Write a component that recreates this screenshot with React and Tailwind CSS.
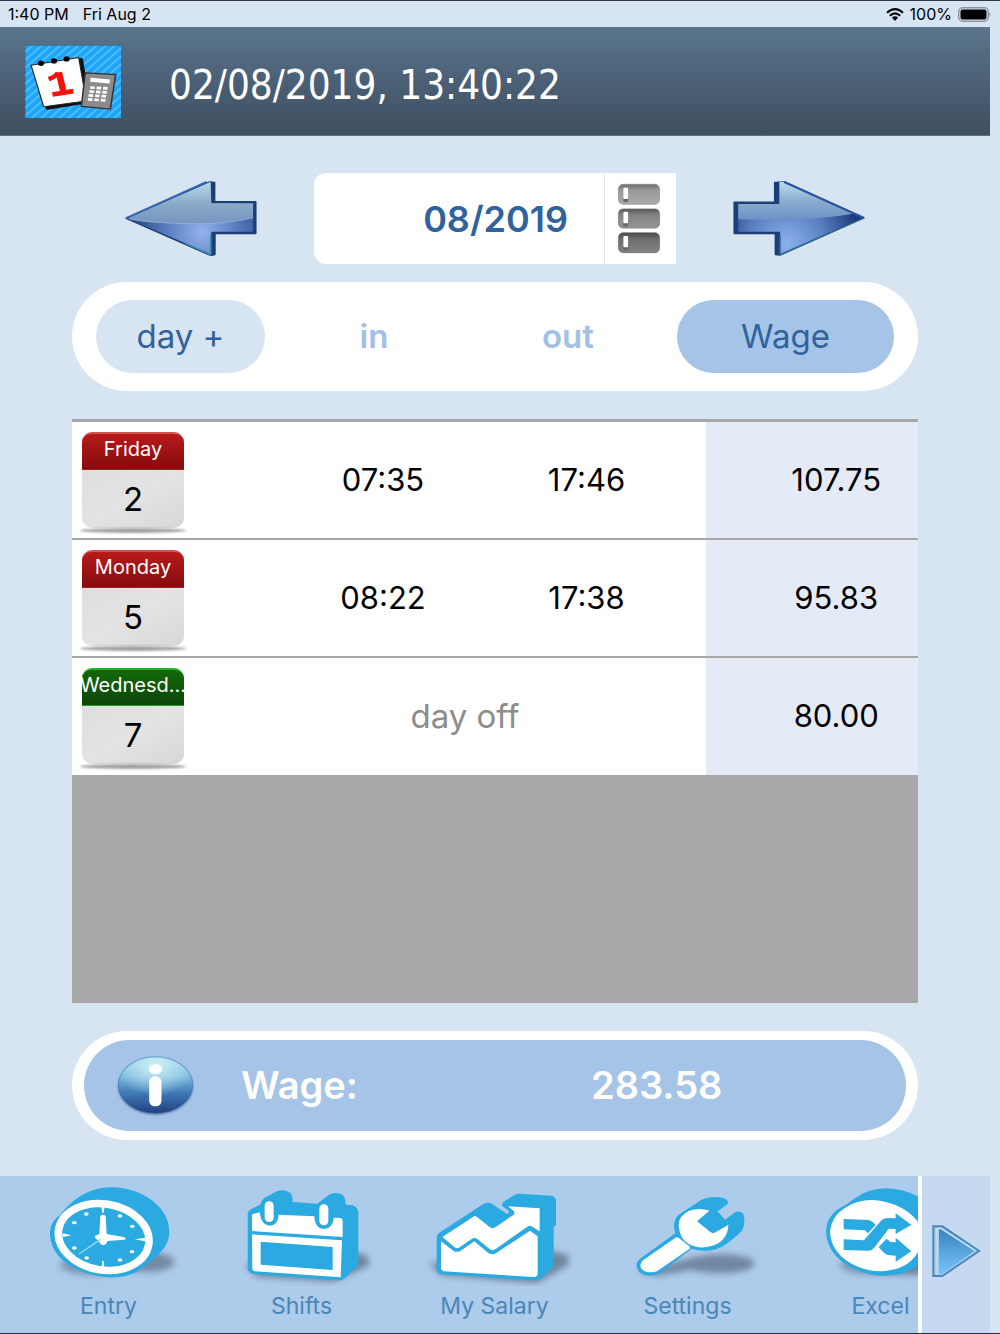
import React from "react";

const BLUE = "#2ba9e1";

function Logo() {
  return (
    <svg viewBox="64 134 252 220" preserveAspectRatio="none" className="h-[73px] w-24 shrink-0" role="img" aria-label="Salary calendar">
      <defs>
        <pattern id="stripes" width="17" height="17" patternUnits="userSpaceOnUse" patternTransform="rotate(45)">
          <rect width="17" height="17" fill="#1da6fb" />
          <rect width="4" height="17" fill="#63c3f7" />
        </pattern>
      </defs>
      <rect x="64" y="134" width="252" height="220" fill="url(#stripes)" />
      <path d="M64 354V135H316" fill="none" stroke="#2b5e80" strokeWidth="2" />
      <path d="M92 203L213 176L232 306L122 326Z" fill="#111" stroke="#111" strokeWidth="6" strokeLinejoin="round" />
      <path d="M80 195L205 172L225 303L113 320Z" fill="#fff" stroke="#222" strokeWidth="3" strokeLinejoin="round" />
      <g fill="#000">
        <circle cx="106" cy="189" r="8" />
        <circle cx="140" cy="182" r="8" />
        <circle cx="173" cy="176" r="8" />
      </g>
      <path d="M126 237Q142 232 151 218" fill="none" stroke="#f5120c" strokeWidth="13" />
      <path d="M136 283L191 273" fill="none" stroke="#f5120c" strokeWidth="14" />
      <path d="M153 216L165 276" stroke="#f5120c" strokeWidth="17" />
      <path d="M222 218L302 223L288 327L212 319Z" fill="#8b8b8b" stroke="#333" strokeWidth="4" />
      <path d="M236 233L287 238L286 250L235 245Z" fill="#fff" />
      <g stroke="#fff" strokeWidth="8" strokeDasharray="12 5">
        <path d="M235 262L282 265" />
        <path d="M233 274L280 277" />
        <path d="M231 286L278 289" />
        <path d="M229 298L276 301" />
      </g>
    </svg>
  );
}

function LeftArrow() {
  return (
    <svg viewBox="42 60 402 232" className="h-[77px] w-[134px]" aria-hidden="true">
      <defs>
        <linearGradient id="laTop" x1="0" y1="0" x2="0" y2="1">
          <stop offset="0" stopColor="#b8deee" />
          <stop offset="0.5" stopColor="#8aabc8" />
          <stop offset="1" stopColor="#7594c0" />
        </linearGradient>
        <radialGradient id="laLow" gradientUnits="userSpaceOnUse" cx="275" cy="218" r="200">
          <stop offset="0" stopColor="#93b3ec" />
          <stop offset="0.5" stopColor="#5b80c1" />
          <stop offset="1" stopColor="#2b4d8e" />
        </radialGradient>
      </defs>
      <path d="M48 175L300 66L314 68V126H438V221H315V284L302 287Z" fill="#1c3f78" stroke="#1c3f78" strokeWidth="5" strokeLinejoin="round" />
      <path d="M50 175L302 66L304 130H430V216H304V284Z" fill="url(#laLow)" />
      <path d="M50 175L302 66L304 130H430V174Q340 194 250 192Q120 190 60 178Z" fill="url(#laTop)" />
      <path d="M60 178Q120 190 250 192Q340 194 430 174" fill="none" stroke="#a3bce0" strokeWidth="2" />
      <path d="M48 175L290 66" stroke="#3563b1" strokeWidth="6" />
      <path d="M220 248L302 285V225" fill="none" stroke="#3f8fae" strokeWidth="4" />
    </svg>
  );
}

function RightArrow() {
  return (
    <svg viewBox="456 60 402 232" className="h-[77px] w-[134px]" aria-hidden="true">
      <defs>
        <linearGradient id="raTop" x1="0" y1="0" x2="0" y2="1">
          <stop offset="0" stopColor="#b8deee" />
          <stop offset="0.5" stopColor="#8aadd0" />
          <stop offset="1" stopColor="#6c90c3" />
        </linearGradient>
        <radialGradient id="raLow" gradientUnits="userSpaceOnUse" cx="620" cy="250" r="220">
          <stop offset="0" stopColor="#8db0ee" />
          <stop offset="0.5" stopColor="#5b82c4" />
          <stop offset="1" stopColor="#1d3b7b" />
        </radialGradient>
      </defs>
      <path d="M462 127H584V68L614 66L852 174L600 286L586 284V221H462Z" fill="#1c3f78" stroke="#1c3f78" strokeWidth="5" strokeLinejoin="round" />
      <path d="M474 132H598V66H614L848 174L600 284V216H474Z" fill="url(#raLow)" />
      <path d="M474 132H598V66H614L820 162Q740 176 640 180Q560 182 474 178Z" fill="url(#raTop)" />
      <path d="M612 66L852 174" stroke="#2a55a5" strokeWidth="6" />
      <path d="M850 176L600 285V225" fill="none" stroke="#2f7394" strokeWidth="4" />
    </svg>
  );
}

function ListIcon() {
  return (
    <svg viewBox="112 76 132 214" className="h-[71px] w-11" aria-hidden="true">
      <defs>
        <linearGradient id="li1" x1="0" y1="0" x2="0" y2="1">
          <stop offset="0" stopColor="#6d6d6d" />
          <stop offset="0.3" stopColor="#9a9a9a" />
          <stop offset="1" stopColor="#a9a9a9" />
        </linearGradient>
        <linearGradient id="li2" x1="0" y1="0" x2="0" y2="1">
          <stop offset="0" stopColor="#555" />
          <stop offset="0.3" stopColor="#828282" />
          <stop offset="1" stopColor="#959595" />
        </linearGradient>
        <linearGradient id="li3" x1="0" y1="0" x2="0" y2="1">
          <stop offset="0" stopColor="#484848" />
          <stop offset="0.3" stopColor="#6d6d6d" />
          <stop offset="1" stopColor="#838383" />
        </linearGradient>
      </defs>
      <rect x="116" y="80" width="124" height="60" rx="14" fill="url(#li1)" stroke="#8a8a8a" strokeWidth="2" />
      <rect x="116" y="154" width="124" height="58" rx="14" fill="url(#li2)" stroke="#777" strokeWidth="2" />
      <rect x="116" y="226" width="124" height="60" rx="14" fill="url(#li3)" stroke="#666" strokeWidth="2" />
      <g fill="#666">
        <rect x="131" y="120" width="14" height="13" />
        <rect x="131" y="196" width="14" height="11" />
        <rect x="131" y="268" width="14" height="11" />
      </g>
      <g fill="#fff">
        <rect x="131" y="90" width="14" height="34" rx="3" />
        <rect x="131" y="163" width="14" height="34" rx="3" />
        <rect x="131" y="236" width="14" height="34" rx="3" />
      </g>
    </svg>
  );
}

function InfoIcon() {
  return (
    <svg viewBox="170 104 236 186" className="h-[62px] w-[79px]" aria-hidden="true">
      <defs>
        <linearGradient id="info" x1="0" y1="0" x2="0" y2="1">
          <stop offset="0" stopColor="#9ed7ea" />
          <stop offset="0.35" stopColor="#7ab9dc" />
          <stop offset="0.65" stopColor="#3f78b5" />
          <stop offset="1" stopColor="#223f80" />
        </linearGradient>
        <radialGradient id="infoGlow" cx="0.5" cy="0.15" r="0.55">
          <stop offset="0" stopColor="#d3f3fa" stopOpacity="0.9" />
          <stop offset="1" stopColor="#d3f3fa" stopOpacity="0" />
        </radialGradient>
        <filter id="infoBlur"><feGaussianBlur stdDeviation="3" /></filter>
      </defs>
      <ellipse cx="288" cy="199" rx="112" ry="84" fill="#35568f" opacity="0.7" filter="url(#infoBlur)" />
      <ellipse cx="288" cy="194" rx="112" ry="85" fill="url(#info)" stroke="#3e6fa8" strokeOpacity="0.5" strokeWidth="3" />
      <ellipse cx="288" cy="194" rx="108" ry="82" fill="url(#infoGlow)" />
      <ellipse cx="288" cy="147" rx="20" ry="15" fill="#fff" />
      <rect x="269" y="168" width="37" height="90" rx="17" fill="#fff" />
    </svg>
  );
}

function IconFrame({ viewBox, children }) {
  return (
    <svg viewBox={viewBox} className="h-[110px] w-[193px]" aria-hidden="true">
      <defs>
        <filter id="soft" x="-30%" y="-50%" width="160%" height="200%"><feGaussianBlur stdDeviation="10" /></filter>
      </defs>
      {children}
    </svg>
  );
}

function EntryIcon() {
  return (
    <IconFrame viewBox="-54 18 579 330">
      <ellipse cx="350" cy="276" rx="84" ry="30" fill="#62748c" opacity="0.75" filter="url(#soft)" />
      <ellipse cx="200" cy="285" rx="110" ry="32" fill="#62748c" opacity="0.6" filter="url(#soft)" />
      <path d="M90 135C130 85 180 52 245 52C335 52 418 110 418 185C418 230 385 255 340 292C300 325 240 328 190 315C110 295 60 250 60 190C60 165 72 148 90 135Z" fill={BLUE} />
      <ellipse cx="221" cy="201" rx="137" ry="99" transform="rotate(10 221 201)" fill="none" stroke="#fff" strokeWidth="23" />
      <g fill="#fff">
        <path d="M214 108H224L221 128H217ZM215 294H223L221 272H217ZM98 190V201L124 196ZM346 203V214L314 208Z" />
        <path d="M211 138Q219 130 227 138L230 192L284 202Q290 206 284 209L232 213Q230 224 219 226Q209 222 206 212Q194 206 194 198L208 192Z" />
        <ellipse cx="169" cy="132" rx="7" ry="5" />
        <ellipse cx="133" cy="158" rx="7" ry="5" />
        <ellipse cx="270" cy="138" rx="7" ry="5" />
        <ellipse cx="307" cy="169" rx="7" ry="5" />
        <ellipse cx="133" cy="234" rx="7" ry="5" />
        <ellipse cx="170" cy="264" rx="7" ry="5" />
        <ellipse cx="270" cy="270" rx="7" ry="5" />
        <ellipse cx="306" cy="245" rx="7" ry="5" />
      </g>
      <path d="M147 252L212 208" stroke="#9bd8f2" strokeWidth="4" />
    </IconFrame>
  );
}

function ShiftsIcon() {
  return (
    <IconFrame viewBox="-45 18 579 330">
      <path d="M75 285L110 320L340 335L450 285L440 255L380 245Z" fill="#56687e" opacity="0.7" filter="url(#soft)" />
      <path d="M83 135Q83 122 96 116L122 103Q124 90 134 83L170 64Q195 55 212 70Q218 78 218 96L292 101L326 75Q345 64 365 73Q377 80 377 104L398 106Q415 112 415 130V276Q414 288 404 296L372 326Q366 332 350 331L100 312Q83 308 83 294Z" fill={BLUE} />
      <path d="M96 133L120 127Q122 166 150 167Q173 166 176 134L283 139Q285 176 312 177Q338 176 341 143L362 144Q368 147 368 154V201L96 183Z" fill="#fff" />
      <rect x="134" y="94" width="27" height="62" rx="13" fill="#fff" />
      <rect x="298" y="103" width="27" height="63" rx="13" fill="#fff" />
      <path fillRule="evenodd" d="M96 193L366 211L362 322L104 304Q97 302 97 295ZM122 215V284L338 300V231Z" fill="#fff" />
    </IconFrame>
  );
}

function SalaryIcon() {
  return (
    <IconFrame viewBox="-36 18 579 330">
      <path d="M60 280L90 315L380 340L475 285V255L410 240Z" fill="#56687e" opacity="0.7" filter="url(#soft)" />
      <path d="M80 200Q82 192 90 187L220 102Q234 94 247 102L292 133L298 124L277 108Q274 102 280 96L315 74Q320 71 328 71L424 77Q438 80 438 94V166L431 170V284Q431 290 424 296L392 326Q386 331 374 331L94 313Q80 308 80 298Z" fill={BLUE} />
      <path d="M97 201L190 140Q195 136 201 141L240 172Q248 177 256 172L311 134Q315 129 312 124L294 109L389 115V184L367 170Q360 165 352 170L256 238Q247 243 240 238L202 207Q194 201 186 206L149 232Q141 238 134 232Z" fill="#fff" />
      <path d="M93 214L130 242Q141 249 152 242L193 214L234 248Q247 257 260 248L360 182L383 199V312Q381 322 371 321L101 304Q93 302 93 294Z" fill="#fff" />
    </IconFrame>
  );
}

function SettingsIcon() {
  return (
    <IconFrame viewBox="-57 18 579 330">
      <path d="M80 305L140 318L240 300Q340 320 410 300Q450 280 420 265Q340 240 240 265Z" fill="#5d7089" opacity="0.75" filter="url(#soft)" />
      <path d="M192 165Q194 145 206 134L270 92Q300 76 340 84Q360 92 352 103L323 124L345 149L372 129Q388 119 400 132Q408 160 396 182Q386 193 350 221Q320 243 286 242Q262 242 245 236L150 308Q134 318 112 316Q82 312 79 286Q79 276 90 266L196 190Q192 178 192 165Z" fill={BLUE} />
      <path d="M299 122Q268 112 238 122Q206 136 206 166Q208 206 236 222Q270 240 312 226Q354 208 355 164L308 188Q298 184 262 154Z" fill="#fff" />
      <path d="M262 154L299 122L345 149L355 164L314 188Q306 191 298 184Z" fill={BLUE} />
      <path d="M194 205Q199 199 206 203L238 229Q243 234 237 238L142 303Q130 309 112 306Q92 302 91 286Q91 277 100 270Z" fill="#fff" />
    </IconFrame>
  );
}

function ExcelIcon() {
  return (
    <IconFrame viewBox="-48 18 579 330">
      <ellipse cx="330" cy="280" rx="110" ry="34" fill="#56687e" opacity="0.75" filter="url(#soft)" />
      <ellipse cx="220" cy="285" rx="100" ry="30" fill="#56687e" opacity="0.5" filter="url(#soft)" />
      <path d="M100 130Q110 118 140 103L165 85Q205 55 260 55Q350 58 420 130Q440 180 400 240L350 290Q310 318 240 317Q160 310 110 260Q78 225 78 182Q80 150 100 130Z" fill={BLUE} />
      <path d="M90 184Q94 140 134 114Q180 84 240 92Q310 104 350 150Q380 200 352 250Q320 302 240 304Q170 300 125 260Q90 228 90 184Z" fill="#fff" />
      <g fill={BLUE}>
        <path d="M131 147L206 150Q214 152 219 157L227 165L204 190L195 181L131 178Z" />
        <path d="M131 208L192 211L243 152Q251 144 262 144L287 145V130L334 164L287 192V177L266 176L222 234Q216 242 205 242L131 240Z" />
        <path d="M236 231L260 206L271 216L287 217V203L334 244L287 275V257L264 255Q254 252 247 244Z" />
      </g>
    </IconFrame>
  );
}

function PlayIcon() {
  return (
    <svg viewBox="392 162 150 162" className="h-[54px] w-[50px]" aria-hidden="true">
      <defs>
        <linearGradient id="play" x1="0" y1="0" x2="0" y2="1">
          <stop offset="0" stopColor="#3983bf" />
          <stop offset="1" stopColor="#79c5f8" />
        </linearGradient>
      </defs>
      <path d="M399 169H426L536 243L426 318H399Z" fill="#a9cdec" stroke="#4a87ba" strokeWidth="6" />
      <path d="M416 178V313H424L522 243L426 178Z" fill="url(#play)" />
      <path d="M410 313V176H422L524 241" fill="none" stroke="#c2def3" strokeWidth="4" />
    </svg>
  );
}

function WifiIcon() {
  return (
    <svg viewBox="0 0 18 13" className="h-[13px] w-[18px]" aria-hidden="true">
      <g fill="none" stroke="#000" strokeWidth="2.2">
        <path d="M1 4.8Q9 -2.4 17 4.8" />
        <path d="M3.8 7.8Q9 3 14.2 7.8" />
      </g>
      <path d="M5.9 9.6Q9 7 12.1 9.6L9 12.9Z" fill="#000" />
    </svg>
  );
}

function Calendar({ weekday, day, off }) {
  return (
    <div className="ml-2 flex w-[106px] flex-col items-center pt-1 text-center">
      <div
        className={
          off
            ? "flex h-[38px] w-[102px] justify-center rounded-t-[10px] border-t-2 border-b border-t-[#2cae22] border-b-[#25a01c] bg-linear-to-b from-[#12690b] to-[#0d4506] text-white"
            : "flex h-[38px] w-[102px] justify-center rounded-t-[10px] border-t-2 border-b border-t-[#cf5250] border-b-[#a81b1b] bg-linear-to-b from-[#b81a1a] to-[#860c0d] text-white"
        }
      >
        <span className="text-xl leading-[30px] whitespace-nowrap">{weekday}</span>
      </div>
      <div className="h-[58px] w-[102px] rounded-b-[10px] bg-linear-to-br from-[#dedede] via-[#e3e3e3] to-[#d8d8d8] text-[33px] leading-[58px]">{day}</div>
      <div className="h-[5px] w-full rounded-[50%] bg-[#a3a3a3] blur-[1px]" />
    </div>
  );
}

const entries = [
  { weekday: "Friday", day: 2, start: "07:35", end: "17:46", wage: "107.75" },
  { weekday: "Monday", day: 5, start: "08:22", end: "17:38", wage: "95.83" },
  { weekday: "Wednesd...", day: 7, off: true, wage: "80.00" },
];

const tabs = [
  { label: "Entry", Icon: EntryIcon },
  { label: "Shifts", Icon: ShiftsIcon },
  { label: "My Salary", Icon: SalaryIcon },
  { label: "Settings", Icon: SettingsIcon },
  { label: "Excel", Icon: ExcelIcon },
];

export default function App() {
  return (
    <div className="flex min-h-screen flex-col border-b border-[#20304a] bg-[#d7e4f2] font-['Inter','Liberation_Sans',sans-serif] text-black">
      <div className="flex h-[27px] items-center border-t border-[#33333f] px-2 text-base">
        <span>1:40 PM</span>
        <span className="ml-3.5">Fri Aug 2</span>
        <span className="ml-auto flex items-center gap-1.5">
          <WifiIcon />
          <span>100%</span>
          <svg viewBox="0 0 34 15" className="h-[15px] w-[34px]" aria-hidden="true">
            <rect x="0.7" y="0.7" width="29.6" height="13.6" rx="4" fill="none" stroke="#8d949c" strokeWidth="1.4" />
            <rect x="2.5" y="2.5" width="26" height="10" rx="2" />
            <path d="M31.5 5Q33.6 7.5 31.5 10Z" fill="#8d949c" />
          </svg>
        </span>
      </div>

      <div className="flex flex-1 flex-col pr-2.5">
        <header className="flex h-[109px] items-center gap-12 border-b border-[#56718a] bg-linear-to-b from-[#5a768c] via-[#4b6076] to-[#3f4f5f] pl-[25px]">
          <Logo />
          <h1 className="pt-2 font-['DejaVu_Sans_Condensed','DejaVu_Sans',sans-serif] text-[40px] leading-[44px] text-white">02/08/2019, 13:40:22</h1>
        </header>

        <main className="flex flex-1 flex-col px-[72px] pt-[37px] pb-9">
          <div className="flex items-center justify-center gap-14">
            <button aria-label="Previous month"><LeftArrow /></button>
            <div className="flex h-[91px] w-[362px] overflow-hidden rounded-l-xl bg-white">
              <input
                aria-label="Month"
                defaultValue="08/2019"
                className="min-w-0 flex-1 pr-9 text-right text-4xl font-semibold text-[#31629c] outline-none"
              />
              <button aria-label="Choose view" className="flex w-[72px] items-center justify-center border-l border-[#e2e5ea] pr-1">
                <ListIcon />
              </button>
            </div>
            <button aria-label="Next month"><RightArrow /></button>
          </div>

          <div className="mt-[18px] flex h-[109px] items-center rounded-full bg-white px-6 text-[33px]">
            <button className="h-[73px] w-[169px] rounded-full bg-[#d7e4f2] text-[#31629c]">day +</button>
            <div className="grid flex-1 grid-cols-2 px-3 text-center font-semibold text-[#a0c0e6]">
              <span>in</span>
              <span>out</span>
            </div>
            <button className="h-[73px] w-[217px] rounded-full bg-[#a5c4e7] text-[#31629c]">Wage</button>
          </div>

          <div className="mt-7 flex-1 bg-[#a8a8a8] pt-px">
            <table className="w-full table-fixed border-collapse text-center text-[31px]">
              <colgroup>
                <col className="w-[25%]" />
                <col className="w-[24%]" />
                <col className="w-[26%]" />
                <col className="w-[25%]" />
              </colgroup>
              <tbody>
                {entries.map((e) => (
                  <tr key={e.day} className="h-[118px] border-t-2 border-[#a8a8a8] bg-white">
                    <td className="p-0">
                      <Calendar weekday={e.weekday} day={e.day} off={e.off} />
                    </td>
                    {e.off ? (
                      <td colSpan={2} className="p-0 pr-[60px] text-[33px] text-[#8c8c8c]">day off</td>
                    ) : (
                      <>
                        <td className="p-0 pr-1">{e.start}</td>
                        <td className="p-0 pr-5">{e.end}</td>
                      </>
                    )}
                    <td className="bg-[#e4ebf7] p-0 pl-12">{e.wage}</td>
                  </tr>
                ))}
              </tbody>
            </table>
          </div>

          <div className="mt-7 rounded-full bg-white px-3 py-[9px]">
            <div className="flex h-[91px] items-center rounded-full bg-[#a5c4e7] pl-8 text-[38px] font-semibold text-white">
              <InfoIcon />
              <span className="ml-[46px] w-[350px]">Wage:</span>
              <span>283.58</span>
            </div>
          </div>
        </main>

        <footer className="flex">
          <nav className="flex min-w-0 flex-1 overflow-hidden bg-[#adcbeb] pl-3">
            {tabs.map(({ label, Icon }) => (
              <button key={label} className="flex w-[193px] shrink-0 flex-col items-center text-[#4a86b8]">
                <Icon />
                <span className="pb-[7px] text-[23px] leading-10">{label}</span>
              </button>
            ))}
          </nav>
          <button aria-label="More" className="flex w-[72px] shrink-0 items-center justify-center border-l-4 border-white bg-[#c6d9f1] pb-2">
            <PlayIcon />
          </button>
        </footer>
      </div>
    </div>
  );
}
